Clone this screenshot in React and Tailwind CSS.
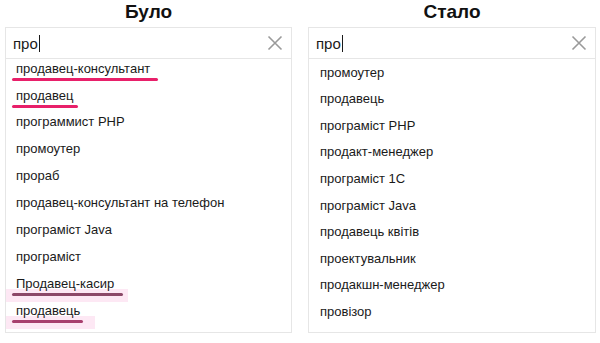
import React from 'react';

const BEFORE = [
  { text: 'продавец-консультант', mark: 'hot', w: 146 },
  { text: 'продавец', mark: 'hot', w: 66 },
  { text: 'программист PHP' },
  { text: 'промоутер' },
  { text: 'прораб' },
  { text: 'продавец-консультант на телефон' },
  { text: 'програміст Java' },
  { text: 'програміст' },
  { text: 'Продавец-касир', mark: 'dim', w: 111, glow: 128 },
  { text: 'продавець', mark: 'dim2', w: 71, glow: 95 }
];

const AFTER = [
  'промоутер',
  'продавець',
  'програміст PHP',
  'продакт-менеджер',
  'програміст 1С',
  'програміст Java',
  'продавець квітів',
  'проектувальник',
  'продакшн-менеджер',
  'провізор'
];

function ClearIcon() {
  return (
    <svg width="16" height="16" viewBox="0 0 16 16" className="shrink-0">
      <path d="M1.5 1.5 L14.5 14.5 M14.5 1.5 L1.5 14.5" stroke="#9a9a9a" strokeWidth="1.6" fill="none" />
    </svg>
  );
}

function SearchBox({ children }) {
  return (
    <div className="border border-[#e6e6e6] bg-white">
      <div className="h-[31px] flex items-center justify-between pl-[7px] pr-[8px] border-b border-[#e6e6e6]">
        <div className="flex items-center text-[15px] text-[#1a1a1a] leading-none">
          <span>про</span>
          <span className="inline-block w-px h-[17px] bg-[#1a1a1a] ml-px" />
        </div>
        <ClearIcon />
      </div>
      {children}
    </div>
  );
}

function Underline({ mark, w, glow }) {
  const color =
    mark === 'hot' ? 'bg-[#e8206a]' : mark === 'dim' ? 'bg-[#8c4868]' : 'bg-[#a8406e]';
  return (
    <>
      {glow ? (
        <span
          className="absolute left-[-6px] top-[19px] h-[13px] bg-[#fde8f4]"
          style={{ width: glow }}
        />
      ) : null}
      <span
        className={`absolute left-[6px] top-[23px] h-[3px] rounded-full ${color}`}
        style={{ width: w }}
      />
    </>
  );
}

export default function App() {
  return (
    <div
      className="w-[600px] h-[343px] bg-white flex gap-[16px] pl-[5px] overflow-hidden"
      style={{ fontFamily: '"Liberation Sans", Arial, sans-serif' }}
    >
      <div className="w-[287px] flex flex-col">
        <h2 className="h-[27px] flex items-center justify-center pb-[3px] text-[19px] font-bold text-[#111]">
          Було
        </h2>
        <SearchBox>
          <div className="overflow-hidden h-[273px]">
            <ul className="-mt-[4px]">
              {BEFORE.map((item) => (
                <li
                  key={item.text}
                  className="relative h-[26.9px] flex items-center pl-[10px] text-[13px] text-[#1a1a1a]"
                >
                  {item.mark ? <Underline mark={item.mark} w={item.w} glow={item.glow} /> : null}
                  <span className="relative">{item.text}</span>
                </li>
              ))}
            </ul>
          </div>
        </SearchBox>
      </div>

      <div className="w-[288px] flex flex-col">
        <h2 className="h-[27px] flex items-center justify-center pb-[3px] text-[19px] font-bold text-[#111]">
          Стало
        </h2>
        <SearchBox>
          <ul className="h-[273px]">
            {AFTER.map((text) => (
              <li
                key={text}
                className="h-[26.6px] flex items-center pl-[11px] text-[13px] text-[#1a1a1a]"
              >
                {text}
              </li>
            ))}
          </ul>
        </SearchBox>
      </div>
    </div>
  );
}
